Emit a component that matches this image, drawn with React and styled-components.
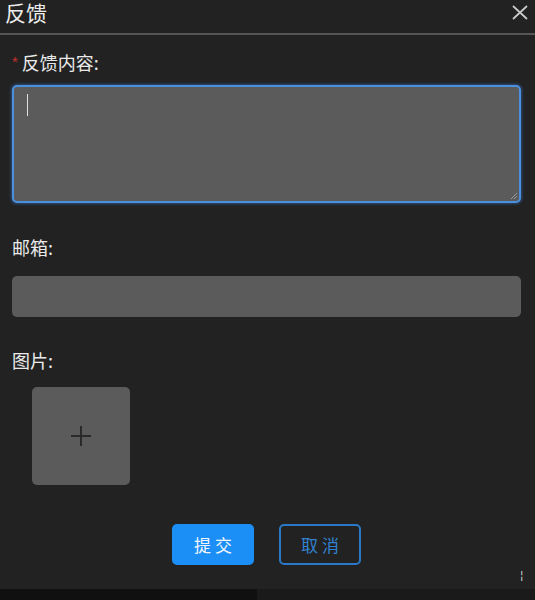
import React from 'react';
import styled, { createGlobalStyle } from 'styled-components';

const GlobalStyle = createGlobalStyle`
  html, body {
    margin: 0;
    padding: 0;
    background: #222222;
  }
  body {
    font-family: "Noto Sans CJK SC", "Noto Sans", sans-serif;
    color: #e6e6e6;
  }
`;

const Dialog = styled.div`
  width: 535px;
  height: 600px;
  display: flex;
  flex-direction: column;
  background: #222222;
  overflow: hidden;
`;

const Header = styled.div`
  height: 33px;
  display: flex;
  align-items: flex-start;
  justify-content: space-between;
  padding: 0 6px 0 5px;
  border-bottom: 2px solid #565656;
`;

const Title = styled.div`
  font-size: 21px;
  line-height: 25px;
  color: #ececec;
`;

const CloseButton = styled.div`
  width: 18px;
  height: 18px;
  margin-top: 3px;
  display: flex;
  align-items: center;
  justify-content: center;
`;

const Body = styled.div`
  flex: 1;
  display: flex;
  flex-direction: column;
  padding: 15px 14px 0 12px;
`;

const Label = styled.div`
  font-size: 18px;
  line-height: 24px;
  color: #eaeaea;
  margin-top: ${p => p.$top || 0}px;
  display: flex;
  align-items: center;
`;

const Star = styled.span`
  color: #c8302c;
  font-size: 15px;
  margin-right: 4px;
  font-family: "Liberation Sans", sans-serif;
`;

const TextBox = styled.div`
  position: relative;
  margin-top: 11px;
  background: #5b5b5b;
  border: 2px solid #4a90de;
  border-radius: 5px;
  box-shadow: 0 0 3px 1px rgba(60, 130, 220, 0.45);
  padding: 7px 13px;
  box-sizing: content-box;
  height: 100px;
`;

const Caret = styled.span`
  display: block;
  width: 1px;
  height: 22px;
  background: #e0e0e0;
`;

const Grip = styled.svg`
  position: absolute;
  right: 1px;
  bottom: 1px;
`;

const Input = styled.div`
  margin-top: 17px;
  height: 41px;
  background: #5b5b5b;
  border-radius: 5px;
`;

const Upload = styled.div`
  margin: 15px 0 0 20px;
  width: 98px;
  height: 98px;
  background: #5b5b5b;
  border-radius: 5px;
  display: flex;
  align-items: center;
  justify-content: center;
`;

const Actions = styled.div`
  margin-top: 39px;
  display: flex;
  justify-content: center;
  gap: 25px;
`;

const Button = styled.div`
  width: 82px;
  height: 41px;
  box-sizing: border-box;
  border-radius: 5px;
  display: flex;
  align-items: center;
  justify-content: center;
  font-size: 17px;
  letter-spacing: 4px;
  text-indent: 4px;
  background: ${p => (p.$primary ? '#1b8ff5' : 'transparent')};
  color: ${p => (p.$primary ? '#f2f6fa' : '#3182d3')};
  border: ${p => (p.$primary ? 'none' : '2px solid #2a78c6')};
`;

const Marker = styled.div`
  align-self: flex-end;
  margin: 4px -2px 0 0;
  font-size: 11px;
  line-height: 12px;
  color: #dddddd;
  font-family: "Liberation Sans", sans-serif;
`;

const Footer = styled.div`
  height: 11px;
  display: flex;
`;

const FooterPart = styled.div`
  width: ${p => p.$w || 'auto'};
  flex: ${p => (p.$w ? '0 0 auto' : 1)};
  background: ${p => p.$bg};
`;

export default function App() {
  return (
    <>
      <GlobalStyle />
      <Dialog>
        <Header>
          <Title>反馈</Title>
          <CloseButton>
            <svg width="16" height="15" viewBox="0 0 16 15">
              <path d="M1 1 L15 14 M15 1 L1 14" stroke="#c8c8c8" strokeWidth="1.8" fill="none" />
            </svg>
          </CloseButton>
        </Header>
        <Body>
          <Label>
            <Star>*</Star>反馈内容:
          </Label>
          <TextBox>
            <Caret />
            <Grip width="9" height="9" viewBox="0 0 9 9">
              <path d="M8 2 L2 8 M8 5 L5 8" stroke="#9a9a9a" strokeWidth="1" fill="none" />
            </Grip>
          </TextBox>
          <Label $top={32}>邮箱:</Label>
          <Input />
          <Label $top={31}>图片:</Label>
          <Upload>
            <svg width="22" height="22" viewBox="0 0 22 22">
              <path d="M11 1 V21 M1 11 H21" stroke="#2a2a2a" strokeWidth="2" fill="none" />
            </svg>
          </Upload>
          <Actions>
            <Button $primary>提交</Button>
            <Button>取消</Button>
          </Actions>
          <Marker>¦</Marker>
        </Body>
        <Footer>
          <FooterPart $w="257px" $bg="#101010" />
          <FooterPart $bg="#1a1a1a" />
        </Footer>
      </Dialog>
    </>
  );
}
